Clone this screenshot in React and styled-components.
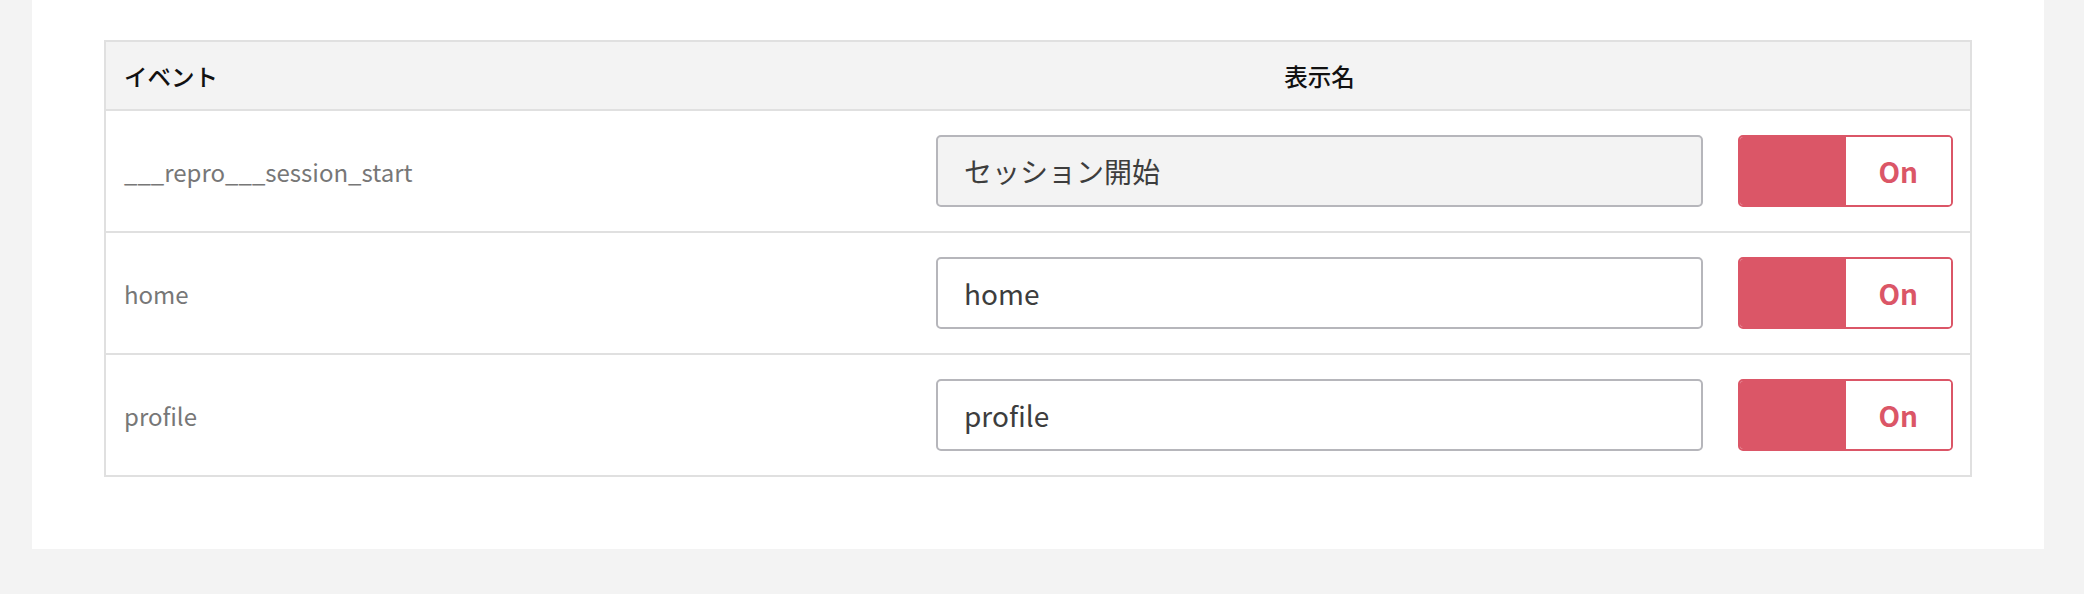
import React from 'react';
import styled, { createGlobalStyle } from 'styled-components';

const GlobalStyle = createGlobalStyle`
  body {
    margin: 0;
    background: #f3f3f3;
    font-family: "Noto Sans CJK JP", "Noto Sans", sans-serif;
  }
`;

const Panel = styled.div`
  margin-left: 32px;
  width: 2012px;
  box-sizing: border-box;
  background: #fff;
  padding: 40px 72px 72px;
`;

const Table = styled.div`
  border: 2px solid #e0e0e0;
`;

const Row = styled.div`
  display: grid;
  grid-template-columns: 1fr 767px 215px;
  column-gap: 35px;
  align-items: center;
  padding: 0 17px 0 18px;
  height: ${(p) => (p.$header ? '67px' : '120px')};
  background: ${(p) => (p.$header ? '#f3f3f3' : '#fff')};
  border-top: ${(p) => (p.$first ? 'none' : '2px solid #e0e0e0')};
`;

const HeadCell = styled.div`
  font-size: 23.5px;
  font-weight: 500;
  color: #111;
  text-align: ${(p) => (p.$center ? 'center' : 'left')};
`;

const EventName = styled.div`
  font-size: 24px;
  color: #777;
`;

const NameInput = styled.input`
  box-sizing: border-box;
  width: 100%;
  height: 72px;
  border: 2px solid #b6b6bb;
  border-radius: 5px;
  padding: 0 26px;
  font-family: inherit;
  font-size: 28px;
  color: #3d3d3d;
  background: ${(p) => (p.disabled ? '#f3f3f3' : '#fff')};
  outline: none;
`;

const Toggle = styled.div`
  display: flex;
  box-sizing: border-box;
  height: 72px;
  border: 2px solid #db5667;
  border-radius: 5px;
  overflow: hidden;
`;

const ToggleFill = styled.div`
  flex: 1;
  background: #db5667;
`;

const ToggleLabel = styled.div`
  flex: 1;
  display: flex;
  align-items: center;
  justify-content: center;
  background: #fff;
  color: #db5667;
  font-weight: 700;
  font-size: 28px;
`;

const events = [
  { id: '___repro___session_start', name: 'セッション開始', locked: true },
  { id: 'home', name: 'home' },
  { id: 'profile', name: 'profile' },
];

export default function App() {
  return (
    <>
      <GlobalStyle />
      <Panel>
        <Table>
          <Row $header $first>
            <HeadCell>イベント</HeadCell>
            <HeadCell $center>表示名</HeadCell>
            <div />
          </Row>
          {events.map((ev) => (
            <Row key={ev.id}>
              <EventName>{ev.id}</EventName>
              <NameInput defaultValue={ev.name} disabled={ev.locked} />
              <Toggle>
                <ToggleFill />
                <ToggleLabel>On</ToggleLabel>
              </Toggle>
            </Row>
          ))}
        </Table>
      </Panel>
    </>
  );
}
